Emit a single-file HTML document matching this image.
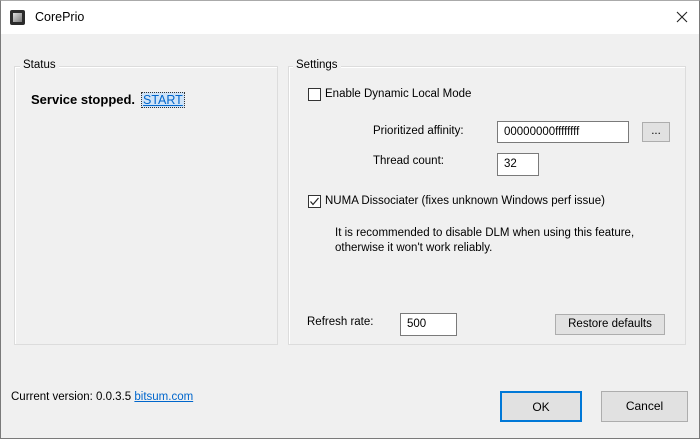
<!DOCTYPE html>
<html><head><style>
*{margin:0;padding:0;box-sizing:border-box}
body{width:700px;height:439px;overflow:hidden;background:#f0f0f0;font-family:"Liberation Sans",sans-serif;font-size:11.5px;color:#000;position:relative}
.a{position:absolute;white-space:nowrap}
.win{position:absolute;left:0;top:0;width:700px;height:439px;border:1px solid #7a7a7a;border-top-color:#aaa}
.title{position:absolute;left:1px;top:1px;width:698px;height:33px;background:#fff}
.grp{position:absolute;border:1px solid #dcdcdc;box-shadow:inset 1px 1px 0 #fff}
.lbl{background:#f0f0f0;padding:0 3px}
.inp{position:absolute;background:#fff;border:1px solid #7a7a7a;padding-left:6px;line-height:20px}
.btn{position:absolute;background:#e1e1e1;border:1px solid #adadad;text-align:center}
.cb{position:absolute;width:13px;height:13px;border:1px solid #333;background:#fff}
</style></head><body>
<div class="win"></div>
<div class="title"></div>
<div class="a" style="left:10px;top:10px;width:15px;height:15px;background:#2a2a2a;border-radius:2px"></div>
<div class="a" style="left:13px;top:13px;width:9px;height:9px;background:linear-gradient(135deg,#ddd,#777)"></div>
<div class="a" style="left:35px;top:10px;font-size:12.5px">CorePrio</div>
<svg class="a" style="left:676px;top:11px" width="12" height="12"><path d="M1 1L11 11M11 1L1 11" stroke="#222" stroke-width="1.1"/></svg>

<div class="grp" style="left:14px;top:66px;width:264px;height:279px"></div>
<div class="a lbl" style="left:20px;top:59px">Status</div>
<div class="a" style="left:31px;top:92px;font-weight:bold;font-size:13px">Service stopped.</div>
<div class="a" style="left:141px;top:92px;padding:0 1px;border:1px dotted #333;color:#0066cc;text-decoration:underline;font-size:12.5px;background:#cfe3f7">START</div>

<div class="grp" style="left:288px;top:66px;width:398px;height:279px"></div>
<div class="a lbl" style="left:293px;top:59px">Settings</div>
<div class="cb" style="left:308px;top:88px"></div>
<div class="a" style="left:325px;top:88px">Enable Dynamic Local Mode</div>
<div class="a" style="left:373px;top:125px">Prioritized affinity:</div>
<div class="inp" style="left:497px;top:121px;width:132px;height:22px">00000000ffffffff</div>
<div class="btn" style="left:642px;top:122px;width:28px;height:20px;line-height:16px">...</div>
<div class="a" style="left:373px;top:155px">Thread count:</div>
<div class="inp" style="left:497px;top:153px;width:42px;height:23px">32</div>
<div class="cb" style="left:308px;top:195px"></div>
<svg class="a" style="left:308px;top:195px" width="13" height="13"><path d="M2.5 6.5L5 9.5L10.5 3" fill="none" stroke="#222" stroke-width="1.2"/></svg>
<div class="a" style="left:325px;top:195px">NUMA Dissociater (fixes unknown Windows perf issue)</div>
<div class="a" style="left:335px;top:226px;line-height:15px">It is recommended to disable DLM when using this feature,<br>otherwise it won't work reliably.</div>
<div class="a" style="left:307px;top:316px">Refresh rate:</div>
<div class="inp" style="left:400px;top:313px;width:57px;height:23px">500</div>
<div class="btn" style="left:555px;top:314px;width:110px;height:21px;line-height:19px">Restore defaults</div>

<div class="a" style="left:11px;top:391px">Current version: 0.0.3.5 <span style="color:#0066cc;text-decoration:underline">bitsum.com</span></div>
<div class="btn" style="left:500px;top:391px;width:82px;height:31px;line-height:29px;border:2px solid #0078d7;font-size:12px">OK</div>
<div class="btn" style="left:601px;top:391px;width:87px;height:31px;line-height:29px;font-size:12px">Cancel</div>
</body></html>
